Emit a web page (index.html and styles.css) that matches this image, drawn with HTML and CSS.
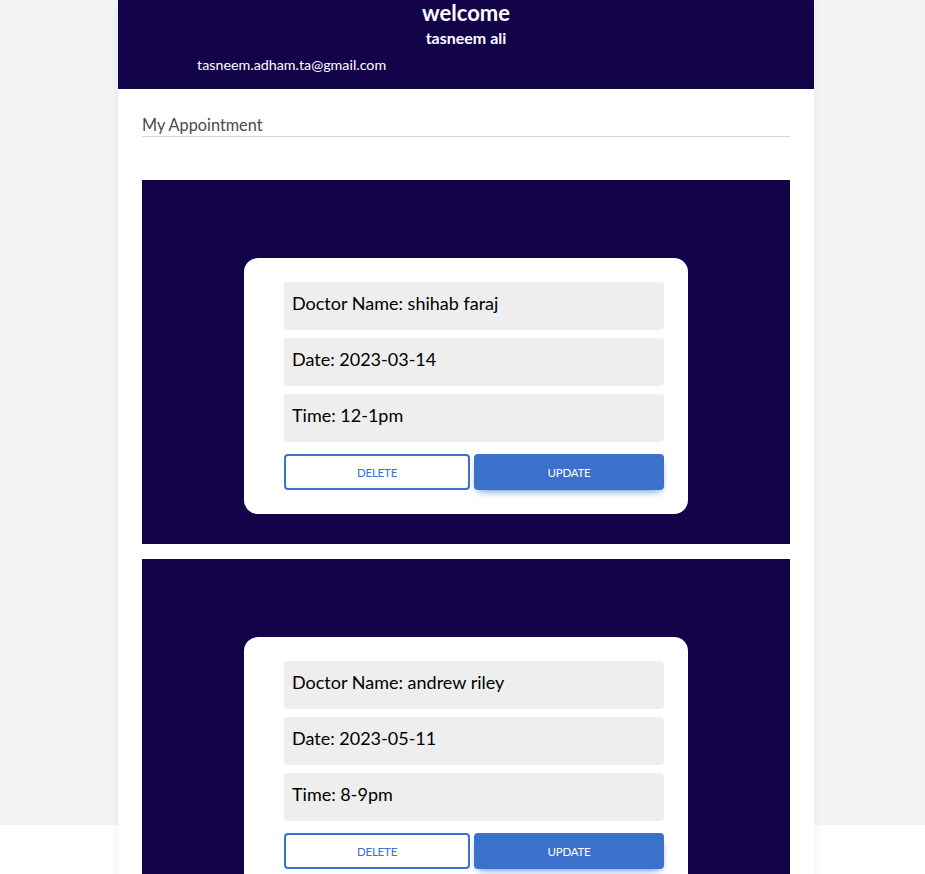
FILE: index.html
```html
<!DOCTYPE html>
<html>
<head>
<meta charset="utf-8">
<link rel="stylesheet" href="styles.css">
</head>
<body>
<main class="page">
  <header class="hero">
    <h1 class="hero-title">welcome</h1>
    <h2 class="hero-name">tasneem ali</h2>
    <p class="hero-email">tasneem.adham.ta@gmail.com</p>
  </header>
  <section class="content">
    <h3 class="section-title">My Appointment</h3>
    <div class="list">
      <div class="slot">
        <div class="card">
          <div class="field">Doctor Name: shihab faraj</div>
          <div class="field">Date: 2023-03-14</div>
          <div class="field">Time: 12-1pm</div>
          <div class="actions">
            <button class="btn btn-outline">DELETE</button>
            <button class="btn btn-primary">UPDATE</button>
          </div>
        </div>
      </div>
      <div class="slot">
        <div class="card">
          <div class="field">Doctor Name: andrew riley</div>
          <div class="field">Date: 2023-05-11</div>
          <div class="field">Time: 8-9pm</div>
          <div class="actions">
            <button class="btn btn-outline">DELETE</button>
            <button class="btn btn-primary">UPDATE</button>
          </div>
        </div>
      </div>
    </div>
  </section>
</main>
</body>
</html>
```

FILE: styles.css
```css
* { box-sizing: border-box; }
html {
  background: #ffffff;
}
body {
  margin: 0;
  padding: 0;
  font-family: "Lato", "Open Sans", sans-serif;
  background: #ffffff linear-gradient(#f3f4f6, #f3f4f6) no-repeat 0 0 / 100% 825px;
}
.page {
  margin-left: 118px;
  width: 696px;
  background: #ffffff;
  box-shadow: 0 0 12px rgba(0, 0, 0, 0.06);
}
.hero {
  background: #130449;
  height: 89px;
  color: #ffffff;
  display: flex;
  flex-direction: column;
  align-items: center;
}
.hero-title {
  margin: 0;
  font-size: 22px;
  font-weight: 700;
  line-height: 26px;
}
.hero-name {
  margin: 2px 0 0;
  font-size: 16px;
  font-weight: 700;
  line-height: 20px;
}
.hero-email {
  margin: 8px 0 0;
  font-size: 14.3px;
  line-height: 18px;
  align-self: flex-start;
  padding-left: 79px;
}
.content {
  padding: 0 24px 40px;
}
.section-title {
  margin: 0;
  padding-top: 25px;
  padding-bottom: 1px;
  font-size: 16.3px;
  font-weight: 400;
  line-height: 21px;
  color: #4b4b4b;
  border-bottom: 1px solid #d6d6d6;
}
.list {
  margin-top: 43px;
  display: flex;
  flex-direction: column;
  gap: 15px;
}
.slot {
  background: #130449;
  height: 364px;
  padding-top: 78px;
  display: flex;
  justify-content: center;
  align-items: flex-start;
}
.card {
  width: 444px;
  background: #ffffff;
  border-radius: 14px;
  padding: 24px 24px 24px 40px;
  display: flex;
  flex-direction: column;
  gap: 8px;
}
.field {
  background: #eeeeee;
  border-radius: 4px;
  height: 48px;
  padding: 0 8px 6px;
  display: flex;
  align-items: center;
  font-size: 18px;
  color: #000000;
}
.actions {
  margin-top: 4px;
  display: flex;
  gap: 4px;
}
.btn {
  height: 36px;
  border-radius: 4px;
  font-family: inherit;
  font-size: 11.5px;
  letter-spacing: -0.2px;
  cursor: pointer;
}
.btn-outline {
  width: 186px;
  background: #ffffff;
  border: 2px solid #3b71ca;
  color: #3b71ca;
}
.btn-primary {
  width: 190px;
  background: #3b71ca;
  border: none;
  color: #ffffff;
  box-shadow: 0 4px 9px -4px #3b71ca;
}
```
